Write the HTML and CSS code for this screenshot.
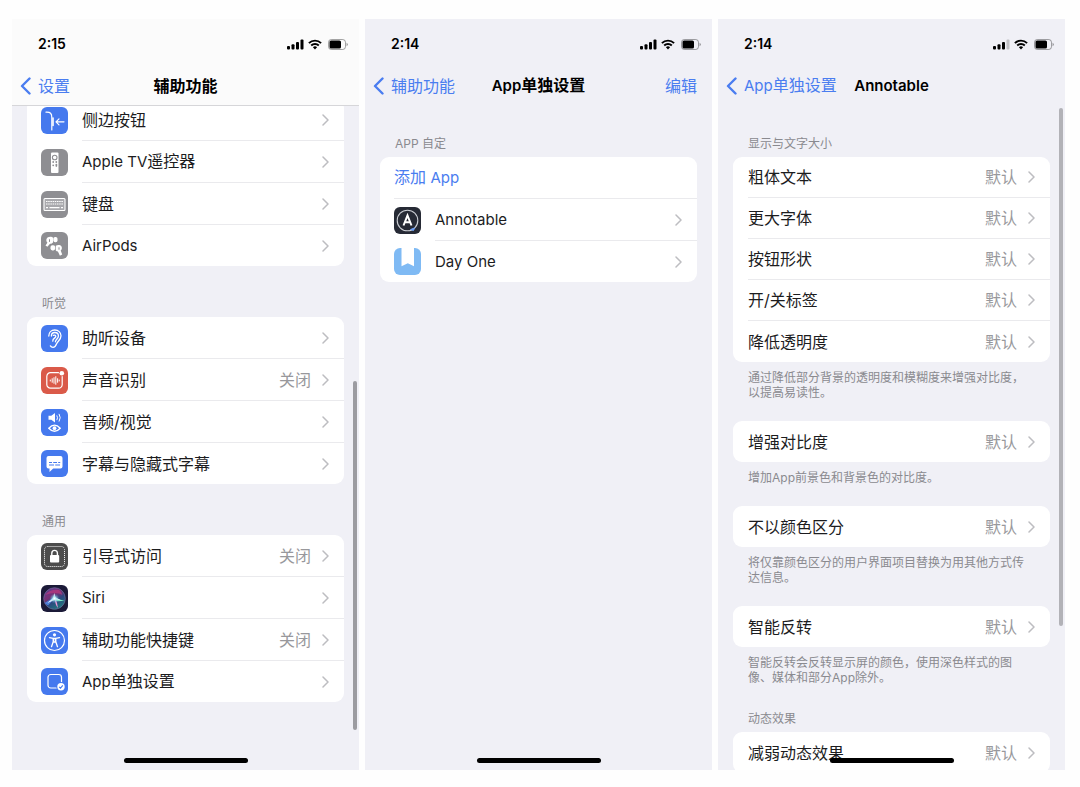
FILE: index.html
```html
<!DOCTYPE html>
<html lang="zh-CN">

<head>
    <meta charset="UTF-8">
    <meta name="viewport" content="width=device-width, initial-scale=1.0">
    <title>辅助功能 - App 单独设置</title>
    <link rel="stylesheet" href="styles.css">
</head>

<body>
    <svg class="sprite" aria-hidden="true">
        <symbol id="chevron" viewBox="0 0 7 12">
            <path d="M1 1l5 5-5 5" fill="none" stroke="currentColor" stroke-width="1.500" stroke-linecap="round" stroke-linejoin="round"/>
        </symbol>
        <symbol id="back" viewBox="0 0 11 18">
            <path d="M9.500 1.500L2 9l7.500 7.500" fill="none" stroke="currentColor" stroke-width="2.400" stroke-linecap="round" stroke-linejoin="round"/>
        </symbol>
        <symbol id="signal" viewBox="0 0 17 11">
            <rect x="0" y="7" width="3" height="3.500" rx="1"/>
            <rect x="4.500" y="5.200" width="3" height="5.300" rx="1"/>
            <rect x="9" y="3" width="3" height="7.500" rx="1"/>
            <rect x="13.500" y="0.500" width="3" height="10" rx="1"/>
        </symbol>
        <symbol id="signal-low" viewBox="0 0 17 11">
            <rect x="0" y="7" width="3" height="3.500" rx="1"/>
            <rect x="4.500" y="5.200" width="3" height="5.300" rx="1"/>
            <rect x="9" y="3" width="3" height="7.500" rx="1"/>
            <rect x="13.500" y="0.500" width="3" height="10" rx="1" opacity="0.200"/>
        </symbol>
        <symbol id="wifi" viewBox="0 0 14 11">
            <g fill="none" stroke="currentColor" stroke-width="1.900">
                <path d="M0.900 4.100a8.700 8.700 0 0 1 12.200 0"/>
                <path d="M3.200 6.500a5.400 5.400 0 0 1 7.600 0"/>
            </g>
            <path d="M4.900 8.200a3 3 0 0 1 4.200 0L7 10.500z"/>
        </symbol>
        <symbol id="battery" viewBox="0 0 20 11">
            <rect x="0.500" y="0.500" width="17" height="10" rx="2.800" fill="none" stroke="currentColor" opacity="0.350"/>
            <rect x="1.500" y="1.500" width="11.500" height="8" rx="1.600"/>
            <path d="M18.600 3.700a2 2 0 0 1 0 3.600z" opacity="0.450"/>
        </symbol>
    </svg>

    <main class="phones">

        <!-- Accessibility, scrolled down -->
        <section class="phone">
            <header class="bar bar-solid">
                <div class="status">
                    <span class="time">2:15</span>
                    <svg class="signal"><use href="#signal"/></svg>
                    <svg class="wifi"><use href="#wifi"/></svg>
                    <svg class="battery"><use href="#battery"/></svg>
                </div>
                <nav class="nav">
                    <a class="back" href="#"><svg><use href="#back"/></svg>设置</a>
                    <h1>辅助功能</h1>
                </nav>
            </header>
            <div class="content content-scrolled">
                <div class="group">
                    <div class="card">
                        <a class="row" href="#">
                            <svg class="icon blue" viewBox="0 0 27 27">
                                <g fill="none" stroke="#fff" stroke-width="1.200" stroke-linecap="round" stroke-linejoin="round">
                                    <path d="M5 5.200c4.500-.3 5.800 1.300 5.800 5.300V23"/>
                                    <path d="M12 11v7.500" stroke-width="1.600"/>
                                    <path d="M23 14.800h-8M18 11.800l-3 3 3 3"/>
                                </g>
                            </svg>
                            <span class="line"><span class="label">侧边按钮</span><svg class="chevron"><use href="#chevron"/></svg></span>
                        </a>
                        <a class="row" href="#">
                            <svg class="icon gray" viewBox="0 0 27 27">
                                <rect x="10" y="3.500" width="7.500" height="20.500" rx="1" fill="#fff"/>
                                <circle cx="13.700" cy="8.500" r="2.300" fill="none" stroke="#8e8e92" stroke-width="1.100"/>
                                <g fill="#8e8e92">
                                    <circle cx="12.200" cy="13" r=".9"/>
                                    <circle cx="15.300" cy="13" r=".9"/>
                                    <circle cx="12.200" cy="16.300" r=".9"/>
                                    <rect x="14.500" y="14.700" width="1.700" height="3.200" rx=".8"/>
                                </g>
                            </svg>
                            <span class="line"><span class="label"><span class="latin">Apple TV</span>遥控器</span><svg class="chevron"><use href="#chevron"/></svg></span>
                        </a>
                        <a class="row" href="#">
                            <svg class="icon gray" viewBox="0 0 27 27">
                                <rect x="3" y="7.500" width="21" height="12" rx="1" fill="#a9a9ad" stroke="#fff" stroke-width="1.100"/>
                                <g stroke="#fff" stroke-width="1.200" fill="none">
                                    <path d="M5 10.500h17M5 13h17" stroke-dasharray="1.500 .7"/>
                                    <path d="M5 16.700h2M8.500 16.700h10M20 16.700h2"/>
                                </g>
                            </svg>
                            <span class="line"><span class="label">键盘</span><svg class="chevron"><use href="#chevron"/></svg></span>
                        </a>
                        <a class="row" href="#">
                            <svg class="icon gray" viewBox="0 0 27 27">
                                <g fill="#fff">
                                    <path d="M6.500 5.500c1.500-1 4.500-1.200 5.500.3v4.700c-.8 1-2 1.300-3 1.200l-2.600 3-1.900-1.300 1.900-2.700c-1.500-1.200-1.500-4 .1-5.200z"/>
                                    <rect x="12.300" y="5" width="4.200" height="5.200" rx="1.800"/>
                                    <rect x="9.500" y="13.200" width="4.700" height="5.200" rx="1.800"/>
                                    <path d="M14.800 13.700c1.500-1 4.700-1 5.600.5.900 1.600.5 3.500-.7 4.400l1.500 4-2.300 1.200-2-4.400c-.8 0-1.600-.3-2.100-1z"/>
                                </g>
                                <path d="M8.500 7.300v2.600M18 15.300v2.400" stroke="#8e8e92"/>
                            </svg>
                            <span class="line"><span class="label latin">AirPods</span><svg class="chevron"><use href="#chevron"/></svg></span>
                        </a>
                    </div>
                </div>

                <div class="group">
                    <h2>听觉</h2>
                    <div class="card">
                        <a class="row" href="#">
                            <svg class="icon blue" viewBox="0 0 27 27">
                                <g fill="none" stroke="#fff" stroke-width="1.300" stroke-linecap="round">
                                    <path d="M7.800 11C7.800 7.300 10.300 5 13.800 5s6.200 2.400 6.200 5.800c0 4-3.300 5.200-4.400 8-.8 2.200-1.800 3.500-3.600 3.500-1.200 0-2.100-.5-2.600-1.400"/>
                                    <path d="M10.400 11c0-2 1.400-3.500 3.400-3.500 2.200 0 3.600 1.400 3.600 3.400 0 2.700-2.800 3.300-3 5.900"/>
                                    <path d="M12.300 10.300c2.400-.8 3.300 1.200 1.700 2.300-1.500 1-2.500 1.800-2.200 3.600"/>
                                </g>
                            </svg>
                            <span class="line"><span class="label">助听设备</span><svg class="chevron"><use href="#chevron"/></svg></span>
                        </a>
                        <a class="row" href="#">
                            <svg class="icon red" viewBox="0 0 27 27">
                                <g fill="none" stroke="#fff" stroke-linecap="round">
                                    <path d="M17.500 5.700H9.500a3.700 3.700 0 0 0-3.700 3.700v8a3.700 3.700 0 0 0 3.700 3.700h8a3.700 3.700 0 0 0 3.700-3.700V9.500" stroke-width="1.200"/>
                                    <path d="M9.300 13v1M11.200 11.700v3.600M13 10.700v5.600M14.800 9.700v7.600M16.600 11.700v3.600M18.200 13v1"/>
                                </g>
                                <circle cx="20.800" cy="6.200" r="2.300" fill="#fff"/>
                            </svg>
                            <span class="line"><span class="label">声音识别</span><span class="value">关闭</span><svg class="chevron"><use href="#chevron"/></svg></span>
                        </a>
                        <a class="row" href="#">
                            <svg class="icon blue" viewBox="0 0 27 27">
                                <path d="M7.500 6.800h2.800L14 4v9.500l-3.700-2.800H7.500z" fill="#fff"/>
                                <g fill="none" stroke="#fff" stroke-linecap="round">
                                    <path d="M16 6.800q1.200 2 0 4M18.200 5.200q2.200 3.500 0 7"/>
                                    <path d="M7.800 19.200q5.700-6.200 11.400 0q-5.700 6.200-11.400 0z" stroke-width="1.400"/>
                                </g>
                                <circle cx="13.500" cy="19.200" r="1.900" fill="#fff"/>
                            </svg>
                            <span class="line"><span class="label">音频/视觉</span><svg class="chevron"><use href="#chevron"/></svg></span>
                        </a>
                        <a class="row" href="#">
                            <svg class="icon blue" viewBox="0 0 27 27">
                                <path d="M7.500 6h12a2 2 0 0 1 2 2v8.500a2 2 0 0 1-2 2h-7.300L8.500 22v-3.500h-1a2 2 0 0 1-2-2V8a2 2 0 0 1 2-2z" fill="#fff"/>
                                <path d="M8 12.500h3M12.200 12.500H16M17.200 12.500h2M8 15h5M14.200 15h4.800" stroke="#4579ee" stroke-width="1.100"/>
                            </svg>
                            <span class="line"><span class="label">字幕与隐藏式字幕</span><svg class="chevron"><use href="#chevron"/></svg></span>
                        </a>
                    </div>
                </div>

                <div class="group">
                    <h2>通用</h2>
                    <div class="card">
                        <a class="row" href="#">
                            <svg class="icon dark" viewBox="0 0 27 27">
                                <rect x="3.500" y="3.500" width="20" height="20" rx="3" fill="none" stroke="#fff" stroke-dasharray="1 1"/>
                                <rect x="9" y="12" width="9.200" height="7.500" rx="1" fill="#fff"/>
                                <path d="M10.800 12v-1.800c0-3.800 5.600-3.800 5.600 0V12" fill="none" stroke="#fff" stroke-width="1.400"/>
                            </svg>
                            <span class="line"><span class="label">引导式访问</span><span class="value">关闭</span><svg class="chevron"><use href="#chevron"/></svg></span>
                        </a>
                        <a class="row" href="#">
                            <svg class="icon siri" viewBox="0 0 27 27">
                                <defs>
                                    <linearGradient id="orb" x1="0.200" y1="0" x2="0.800" y2="1">
                                        <stop offset="0" stop-color="#5c3f92"/>
                                        <stop offset="0.350" stop-color="#7a2f74"/>
                                        <stop offset="0.600" stop-color="#2b4a80"/>
                                        <stop offset="1" stop-color="#1d7f7c"/>
                                    </linearGradient>
                                    <radialGradient id="glow">
                                        <stop offset="0" stop-color="#fff"/>
                                        <stop offset="0.400" stop-color="#9ee4f2" stop-opacity="0.700"/>
                                        <stop offset="1" stop-color="#4aa6d8" stop-opacity="0"/>
                                    </radialGradient>
                                </defs>
                                <circle cx="13.500" cy="13.500" r="10.800" fill="url(#orb)" stroke="#6f6c9a" stroke-width=".7"/>
                                <path d="M4 10q5-6 14-5 3 2 3.500 5-7-4-17.500 0z" fill="#c83a7e" opacity="0.600"/>
                                <path d="M3.500 18q4-2 10-6.500-3 6-6.500 9z" fill="#4f8ff0" opacity="0.800"/>
                                <path d="M13.500 11.500q4 3.500 10 4-5 1-9 .5z" fill="#7be8c4"/>
                                <path d="M13.500 12q3 5 3.500 11-3-3-3.500-11z" fill="#f29ad8"/>
                                <path d="M13.300 8l1.200 4.500 5 2.500-5.500-.3L6.500 18l5.500-5z" fill="#fff"/>
                                <circle cx="13.500" cy="13.500" r="5" fill="url(#glow)"/>
                            </svg>
                            <span class="line"><span class="label latin">Siri</span><svg class="chevron"><use href="#chevron"/></svg></span>
                        </a>
                        <a class="row" href="#">
                            <svg class="icon blue" viewBox="0 0 27 27">
                                <circle cx="13.500" cy="13.500" r="10" fill="none" stroke="#fff" stroke-width="1.200"/>
                                <circle cx="13.500" cy="7.800" r="1.600" fill="#fff"/>
                                <path d="M8.500 10.700l3.700.7v3.300l-1.700 5M18.500 10.700l-3.700.7v3.300l1.700 5M12.500 11.500h2v3.500h-2z" fill="none" stroke="#fff" stroke-width="1.300" stroke-linecap="round" stroke-linejoin="round"/>
                            </svg>
                            <span class="line"><span class="label">辅助功能快捷键</span><span class="value">关闭</span><svg class="chevron"><use href="#chevron"/></svg></span>
                        </a>
                        <a class="row" href="#">
                            <svg class="icon blue" viewBox="0 0 27 27">
                                <rect x="7" y="6.500" width="13.500" height="13.500" rx="2.800" fill="none" stroke="#fff" stroke-width="1.200"/>
                                <circle cx="20" cy="18.700" r="4.700" fill="#4579ee"/>
                                <circle cx="20" cy="18.700" r="3.700" fill="#fff"/>
                                <path d="M18.200 18.800l1.300 1.300 2.300-2.700" fill="none" stroke="#4579ee" stroke-width="1.100"/>
                            </svg>
                            <span class="line"><span class="label"><span class="latin">App</span>单独设置</span><svg class="chevron"><use href="#chevron"/></svg></span>
                        </a>
                    </div>
                </div>
                <div class="scrollbar scrollbar-low"></div>
            </div>
            <div class="home"></div>
        </section>

        <!-- Per-app list -->
        <section class="phone">
            <header class="bar">
                <div class="status">
                    <span class="time">2:14</span>
                    <svg class="signal"><use href="#signal"/></svg>
                    <svg class="wifi"><use href="#wifi"/></svg>
                    <svg class="battery"><use href="#battery"/></svg>
                </div>
                <nav class="nav">
                    <a class="back" href="#"><svg><use href="#back"/></svg>辅助功能</a>
                    <h1><span class="latin">App</span>单独设置</h1>
                    <button class="edit" type="button">编辑</button>
                </nav>
            </header>
            <div class="content">
                <div class="group">
                    <h2>APP 自定</h2>
                    <div class="card">
                        <button class="row add" type="button"><span class="line"><span class="label">添加 <span class="latin">App</span></span></span></button>
                        <a class="row" href="#">
                            <svg class="icon ink" viewBox="0 0 27 27">
                                <circle cx="13.500" cy="13.500" r="10.300" fill="none" stroke="#c9ccd2" stroke-width="1.100"/>
                                <path d="M9.500 18.500l4-10 4 10M11 15.300h5" fill="none" stroke="#fff" stroke-width="2"/>
                                <path d="M16.500 22.500l4-1.500-1 2.500z" fill="#6fa0f5" stroke="#6fa0f5"/>
                            </svg>
                            <span class="line"><span class="label latin">Annotable</span><svg class="chevron"><use href="#chevron"/></svg></span>
                        </a>
                        <a class="row" href="#">
                            <svg class="icon sky" viewBox="0 0 27 27">
                                <path d="M7.500 0h12.500v18.200l-6.200-3-6.300 3z" fill="#fff"/>
                            </svg>
                            <span class="line"><span class="label latin">Day One</span><svg class="chevron"><use href="#chevron"/></svg></span>
                        </a>
                    </div>
                </div>
            </div>
            <div class="home"></div>
        </section>

        <!-- Settings for one app -->
        <section class="phone">
            <header class="bar">
                <div class="status">
                    <span class="time">2:14</span>
                    <svg class="signal"><use href="#signal-low"/></svg>
                    <svg class="wifi"><use href="#wifi"/></svg>
                    <svg class="battery"><use href="#battery"/></svg>
                </div>
                <nav class="nav">
                    <a class="back" href="#"><svg><use href="#back"/></svg><span><span class="latin">App</span>单独设置</span></a>
                    <h1><span class="latin">Annotable</span></h1>
                </nav>
            </header>
            <div class="content content-compact">
                <div class="group">
                    <h2>显示与文字大小</h2>
                    <div class="card">
                        <a class="row" href="#"><span class="line"><span class="label">粗体文本</span><span class="value">默认</span><svg class="chevron"><use href="#chevron"/></svg></span></a>
                        <a class="row" href="#"><span class="line"><span class="label">更大字体</span><span class="value">默认</span><svg class="chevron"><use href="#chevron"/></svg></span></a>
                        <a class="row" href="#"><span class="line"><span class="label">按钮形状</span><span class="value">默认</span><svg class="chevron"><use href="#chevron"/></svg></span></a>
                        <a class="row" href="#"><span class="line"><span class="label">开/关标签</span><span class="value">默认</span><svg class="chevron"><use href="#chevron"/></svg></span></a>
                        <a class="row" href="#"><span class="line"><span class="label">降低透明度</span><span class="value">默认</span><svg class="chevron"><use href="#chevron"/></svg></span></a>
                    </div>
                    <p class="note">通过降低部分背景的透明度和模糊度来增强对比度，以提高易读性。</p>
                </div>
                <div class="group">
                    <div class="card">
                        <a class="row" href="#"><span class="line"><span class="label">增强对比度</span><span class="value">默认</span><svg class="chevron"><use href="#chevron"/></svg></span></a>
                    </div>
                    <p class="note">增加App前景色和背景色的对比度。</p>
                </div>
                <div class="group">
                    <div class="card">
                        <a class="row" href="#"><span class="line"><span class="label">不以颜色区分</span><span class="value">默认</span><svg class="chevron"><use href="#chevron"/></svg></span></a>
                    </div>
                    <p class="note">将仅靠颜色区分的用户界面项目替换为用其他方式传达信息。</p>
                </div>
                <div class="group">
                    <div class="card">
                        <a class="row" href="#"><span class="line"><span class="label">智能反转</span><span class="value">默认</span><svg class="chevron"><use href="#chevron"/></svg></span></a>
                    </div>
                    <p class="note">智能反转会反转显示屏的颜色，使用深色样式的图像、媒体和部分App除外。</p>
                </div>
                <div class="group">
                    <h2>动态效果</h2>
                    <div class="card">
                        <a class="row" href="#"><span class="line"><span class="label">减弱动态效果</span><span class="value">默认</span><svg class="chevron"><use href="#chevron"/></svg></span></a>
                    </div>
                </div>
                <div class="scrollbar"></div>
            </div>
            <div class="home"></div>
        </section>

    </main>
</body>
</html>
```
FILE: styles.css
```css
* {
    box-sizing: border-box;
}

body {
    margin: 0;
    background-color: #fefefe;
    color: #1c1c1e;
    font-family: Inter, "Noto Sans CJK SC", sans-serif;
    font-size: 16px;
    line-height: 20px;
}

h1, h2, p {
    margin: 0;
}

a {
    color: inherit;
    text-decoration: none;
}

button {
    border: 0;
    background: none;
    font: inherit;
    text-align: left;
    cursor: pointer;
}

.sprite {
    display: none;
}

.phones {
    display: flex;
    gap: 6px;
    height: 100vh;
    padding: 19px 15px 17px 12px;
}

.phone {
    position: relative;
    flex: 1;
    min-width: 0;
    display: flex;
    flex-direction: column;
    overflow: hidden;
    background-color: #f0f0f6;
}

/* status and navigation */
.bar {
    position: relative;
    z-index: 1;
    padding-top: 15px;
    border-bottom: 1px solid transparent;
}

.bar-solid {
    background-color: #fbfbfb;
    border-bottom-color: #d6d6d9;
}

.status {
    display: flex;
    align-items: center;
    height: 20px;
    padding: 0 11px 0 26px;
    color: #000;
    fill: currentColor;
}

.time {
    flex: 1;
    font-size: 14px;
    font-weight: 600;
}

.signal {
    width: 17px;
    height: 11px;
}

.wifi {
    width: 14px;
    height: 11px;
    margin: 0 6px 0 4px;
}

.battery {
    width: 20px;
    height: 11px;
}

.nav {
    display: grid;
    grid-template-columns: 1fr auto 1fr;
    align-items: center;
    height: 51px;
    padding: 12px 8px 0;
}

.nav h1 {
    color: #000;
    font-size: 16px;
    font-weight: 600;
}

.back {
    display: flex;
    align-items: center;
    gap: 7px;
    color: #4a7df0;
    white-space: nowrap;
}

.back svg {
    width: 11px;
    height: 18px;
}

.edit {
    justify-self: end;
    padding: 0 7px;
    color: #4a7df0;
}

/* lists */
.content {
    position: relative;
    flex: 1;
    min-height: 0;
    display: flex;
    flex-direction: column;
    gap: 25px;
    padding: 25px 15px 0;
}

.content-compact {
    gap: 21px;
}

.content-scrolled {
    margin-top: -7px;
    padding-top: 0;
}

.group h2 {
    padding: 5px 15px;
    color: #8a8a8f;
    font-size: 12px;
    font-weight: 400;
    line-height: 16px;
}

.card {
    overflow: hidden;
    border-radius: 9px;
    background-color: #fff;
}

.row {
    display: flex;
    align-items: center;
    gap: 14px;
    width: 100%;
    padding: 0 0 0 14px;
}

.content-compact .row {
    padding-left: 15px;
}

.line {
    flex: 1;
    display: flex;
    align-items: center;
    height: 42px;
    padding-right: 15px;
    border-bottom: 1px solid #eaeaed;
}

.content-compact .line {
    height: 41px;
}

.row:last-child .line {
    height: 41px;
    border-bottom: 0;
}

.label {
    flex: 1;
}

.latin {
    font-size: 15px;
}

.value {
    margin-right: 11px;
    color: #98989c;
}

.chevron {
    width: 7px;
    height: 12px;
    color: #bdbdc1;
}

.add {
    color: #4a7df0;
}

.note {
    padding: 8px 20px 0 15px;
    color: #8a8a8f;
    font-size: 12px;
    line-height: 15px;
}

/* app icons */
.icon {
    width: 27px;
    height: 27px;
    border-radius: 6px;
}

.blue { background-color: #4579ee; }
.gray { background-color: #8e8e92; }
.red { background-color: #da5a49; }
.dark { background-color: #4c4c4c; }
.siri { background-color: #1b1a38; }
.ink { background-color: #262a35; }
.sky { background-color: #7fbaf4; }

.scrollbar {
    position: absolute;
    top: 2px;
    right: 2px;
    width: 4px;
    height: 78%;
    border-radius: 2px;
    background-color: #b2b2b7;
}

.scrollbar-low {
    top: 42%;
    height: 52%;
    background-color: #9c9ca1;
}

.home {
    position: absolute;
    left: 50%;
    bottom: 7px;
    width: 124px;
    height: 5px;
    border-radius: 3px;
    background-color: #000;
    transform: translateX(-50%);
}
```
